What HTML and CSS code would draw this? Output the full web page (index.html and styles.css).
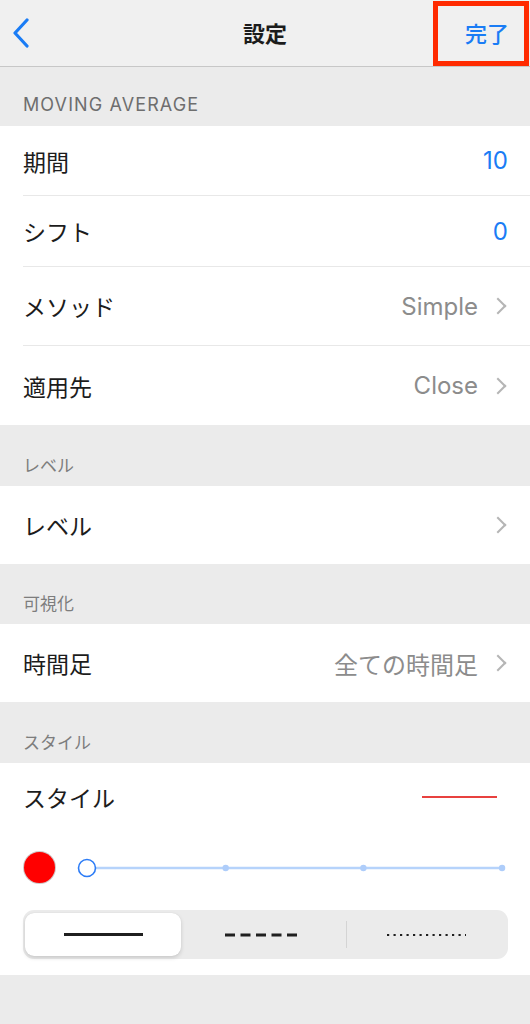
FILE: index.html
```html
<!DOCTYPE html>
<html lang="ja">
<head>
    <meta charset="UTF-8">
    <meta name="viewport" content="width=device-width, initial-scale=1.0">
    <title>設定</title>
    <link rel="stylesheet" href="styles.css">
</head>
<body>
<div class="screen">
    <header class="nav">
        <svg class="back" width="18" height="30" viewBox="0 0 18 30">
            <path d="M15 2 L3 15 L15 28" fill="none" stroke="#1a7cf5" stroke-width="3.2" stroke-linecap="round" stroke-linejoin="round"/>
        </svg>
        <h1 class="title">設定</h1>
        <span class="done">完了</span>
        <!-- highlight box -->
        <div class="mark"></div>
    </header>

    <div class="section-head first">MOVING AVERAGE</div>
    <div class="card">
        <div class="row short"><span class="label">期間</span><span class="value blue">10</span></div>
        <div class="row short2"><span class="label">シフト</span><span class="value blue">0</span></div>
        <div class="row tall"><span class="label">メソッド</span><span class="value">Simple</span><span class="chev"></span></div>
        <div class="row tall"><span class="label">適用先</span><span class="value">Close</span><span class="chev"></span></div>
    </div>

    <div class="section-head jp">レベル</div>
    <div class="card">
        <div class="row link"><span class="label">レベル</span><span class="chev"></span></div>
    </div>

    <div class="section-head jp mid">可視化</div>
    <div class="card">
        <div class="row link"><span class="label">時間足</span><span class="value">全ての時間足</span><span class="chev"></span></div>
    </div>

    <div class="section-head jp">スタイル</div>
    <div class="card style-card">
        <div class="style-top">
            <span class="label">スタイル</span>
            <span class="line-sample"></span>
        </div>
        <div class="style-color">
            <span class="swatch"></span>
            <svg class="slider" width="432" height="22" viewBox="0 0 432 22">
                <line x1="19" y1="11" x2="426" y2="11" stroke="#b6d3fb" stroke-width="2.4"/>
                <circle cx="149" cy="11" r="3.2" fill="#aecdfa"/>
                <circle cx="287" cy="11" r="3.2" fill="#aecdfa"/>
                <circle cx="426" cy="11" r="3.2" fill="#aecdfa"/>
                <circle cx="10" cy="11" r="8.5" fill="#fff" stroke="#2c7cf6" stroke-width="1.6"/>
            </svg>
        </div>
        <div class="segmented">
            <div class="seg selected"><span class="solid"></span></div>
            <div class="seg">
                <svg class="dashed" width="72" height="4" viewBox="0 0 72 4">
                    <line x1="0" y1="2" x2="72" y2="2" stroke="#1f1f1f" stroke-width="3" stroke-dasharray="10 5.5"/>
                </svg>
            </div>
            <div class="seg last">
                <svg width="80" height="4" viewBox="0 0 80 4">
                    <line x1="1" y1="2" x2="80" y2="2" stroke="#1f1f1f" stroke-width="2.2" stroke-dasharray="2.2 4.3"/>
                </svg>
            </div>
        </div>
    </div>
</div>
</body>
</html>
```

FILE: styles.css
```css
* {
    box-sizing: border-box;
}

body {
    margin: 0;
    font-family: "Inter", "Noto Sans CJK JP", sans-serif;
    background-color: #ebebeb;
    color: #1c1c1c;
}

.screen {
    width: 530px;
    min-height: 1024px;
    background-color: #ebebeb;
}

.nav {
    position: relative;
    height: 67px;
    background-color: #f0f0f0;
    border-bottom: 1px solid #c7c7c7;
    display: flex;
    align-items: center;
    justify-content: space-between;
    padding: 0 21px 2px 12px;
}

.back {
    margin-top: 2px;
}

.title {
    margin: 0;
    font-size: 22px;
    font-weight: 600;
    color: #1c1c1c;
    position: absolute;
    left: 0;
    right: 0;
    text-align: center;
    pointer-events: none;
}

.done {
    font-size: 22px;
    font-weight: 500;
    color: #1a7cf5;
}

.mark {
    position: absolute;
    left: 433px;
    top: 1px;
    width: 96px;
    height: 65px;
    border: 5px solid #ff2a00;
}

.section-head {
    height: 61px;
    display: flex;
    align-items: flex-end;
    padding: 0 0 9px 23px;
    font-size: 18px;
    color: #6e6e6e;
}

.section-head.first {
    height: 59px;
    padding-bottom: 11px;
    letter-spacing: 1.1px;
}

.section-head.mid {
    height: 60px;
}

.section-head.jp {
    font-size: 17px;
    color: #7d7d7d;
}

.card {
    background-color: #fff;
    padding-left: 23px;
}

.row {
    height: 78px;
    display: flex;
    align-items: center;
    padding-right: 22px;
    border-bottom: 1px solid #e8e8e8;
}

.row:last-child {
    border-bottom: none;
}

.row.short {
    height: 70px;
}

.row.short2 {
    height: 71px;
}

.row.tall {
    height: 79px;
}

.label {
    flex: 1;
    font-size: 23px;
    color: #1c1c1c;
}

.value {
    font-size: 24px;
    color: #8c8c8c;
}

.value.blue {
    color: #1a7cf5;
}

.chev {
    width: 12px;
    height: 12px;
    margin-left: 14px;
    margin-right: 4px;
    border-top: 2.2px solid #b5b5b5;
    border-right: 2.2px solid #b5b5b5;
    transform: rotate(45deg);
}

.style-card {
    padding: 0 22px 16px 23px;
}

.style-top {
    height: 66px;
    display: flex;
    align-items: center;
    padding-top: 2px;
}

.line-sample {
    width: 75px;
    height: 2px;
    background-color: #e8413f;
    margin-right: 11px;
}

.style-color {
    height: 76px;
    display: flex;
    align-items: center;
}

.swatch {
    width: 31px;
    height: 31px;
    border-radius: 50%;
    background-color: #ff0000;
    box-shadow: 0 0 0 1px #d0c8c8;
    margin-left: 1px;
}

.slider {
    margin-left: 22px;
    margin-top: 2px;
}

.segmented {
    margin-top: 5px;
    height: 49px;
    background-color: #ebebeb;
    border-radius: 11px;
    padding: 3px 2px;
    display: grid;
    grid-template-columns: 1fr 1fr 1fr;
}

.seg {
    display: flex;
    align-items: center;
    justify-content: center;
    position: relative;
}

.seg.selected {
    background-color: #fff;
    border-radius: 9px;
    margin-right: 4px;
    box-shadow: 0 2px 4px rgba(0, 0, 0, 0.14), 0 0 1px rgba(0, 0, 0, 0.1);
}

.seg.last {
    border-left: 1px solid #d4d4d4;
    margin: 8px 0;
}

.dashed {
    margin-right: 9px;
}

.solid {
    width: 79px;
    height: 3px;
    background-color: #1f1f1f;
    margin-left: 1px;
}
```
